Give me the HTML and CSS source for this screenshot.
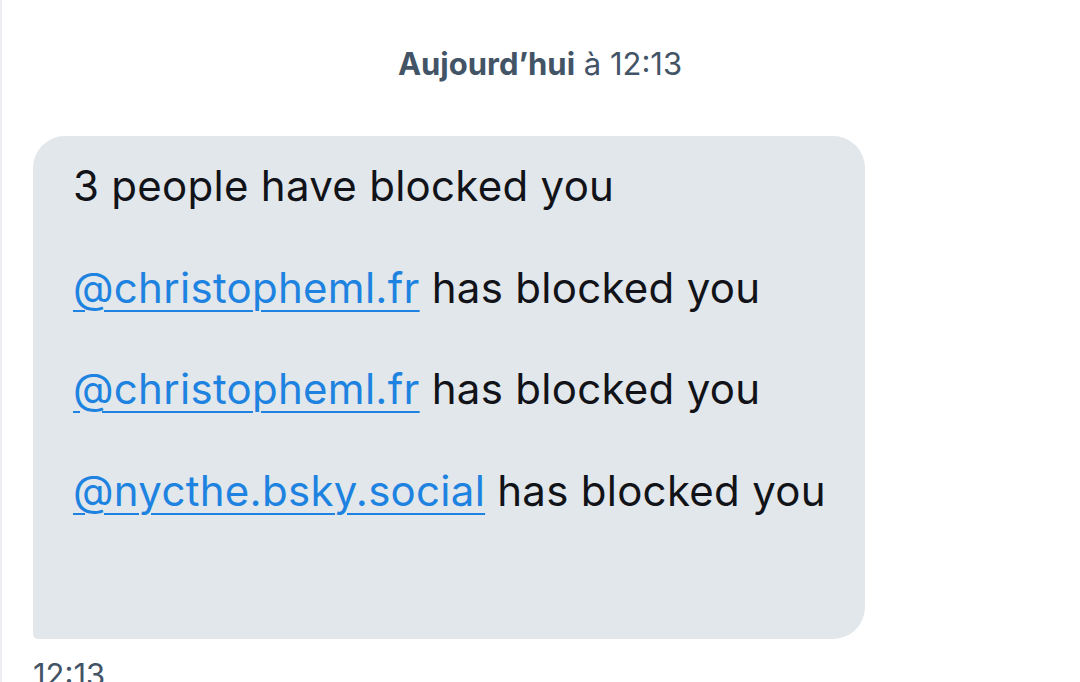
FILE: index.html
```html
<!DOCTYPE html>
<html lang="fr">
<head>
<meta charset="utf-8">
<link rel="stylesheet" href="styles.css">
</head>
<body>
<div class="page">
  <div class="day"><b>Aujourd’hui</b> à 12:13</div>
  <div class="bubble">
    <div class="line">3 people have blocked you</div>
    <div class="line"><a href="#">@christopheml.fr</a> has blocked you</div>
    <div class="line"><a href="#">@christopheml.fr</a> has blocked you</div>
    <div class="line"><a href="#">@nycthe.bsky.social</a> has blocked you</div>
  </div>
  <div class="time">12:13</div>
</div>
</body>
</html>
```

FILE: styles.css
```css
html, body {
  margin: 0;
  padding: 0;
  background: #ffffff;
  overflow: hidden;
}
.page {
  width: 1080px;
  height: 682px;
  box-sizing: border-box;
  border-left: 2px solid #eceef1;
  padding-left: 31px;
  font-family: Inter, "Noto Sans", sans-serif;
}
.day {
  text-align: center;
  font-size: 31px;
  line-height: 40px;
  color: #435466;
  padding-top: 44px;
  padding-right: 33px;
}
.day b {
  font-weight: 700;
}
.bubble {
  margin-top: 52px;
  width: 832px;
  box-sizing: border-box;
  background: #e2e7eb;
  border-radius: 32px 32px 32px 5px;
  padding: 25px 30px 123px 40px;
  display: flex;
  flex-direction: column;
  gap: 50.75px;
  font-size: 42px;
  line-height: 50.75px;
  letter-spacing: 0.28px;
  color: #111318;
}
.line {
  white-space: nowrap;
}
.bubble a {
  color: #1e83e0;
  text-decoration: underline;
  text-decoration-thickness: 2px;
  text-underline-offset: 7px;
}
.time {
  margin-top: 16px;
  font-size: 31px;
  line-height: 40px;
  color: #435466;
}
```
